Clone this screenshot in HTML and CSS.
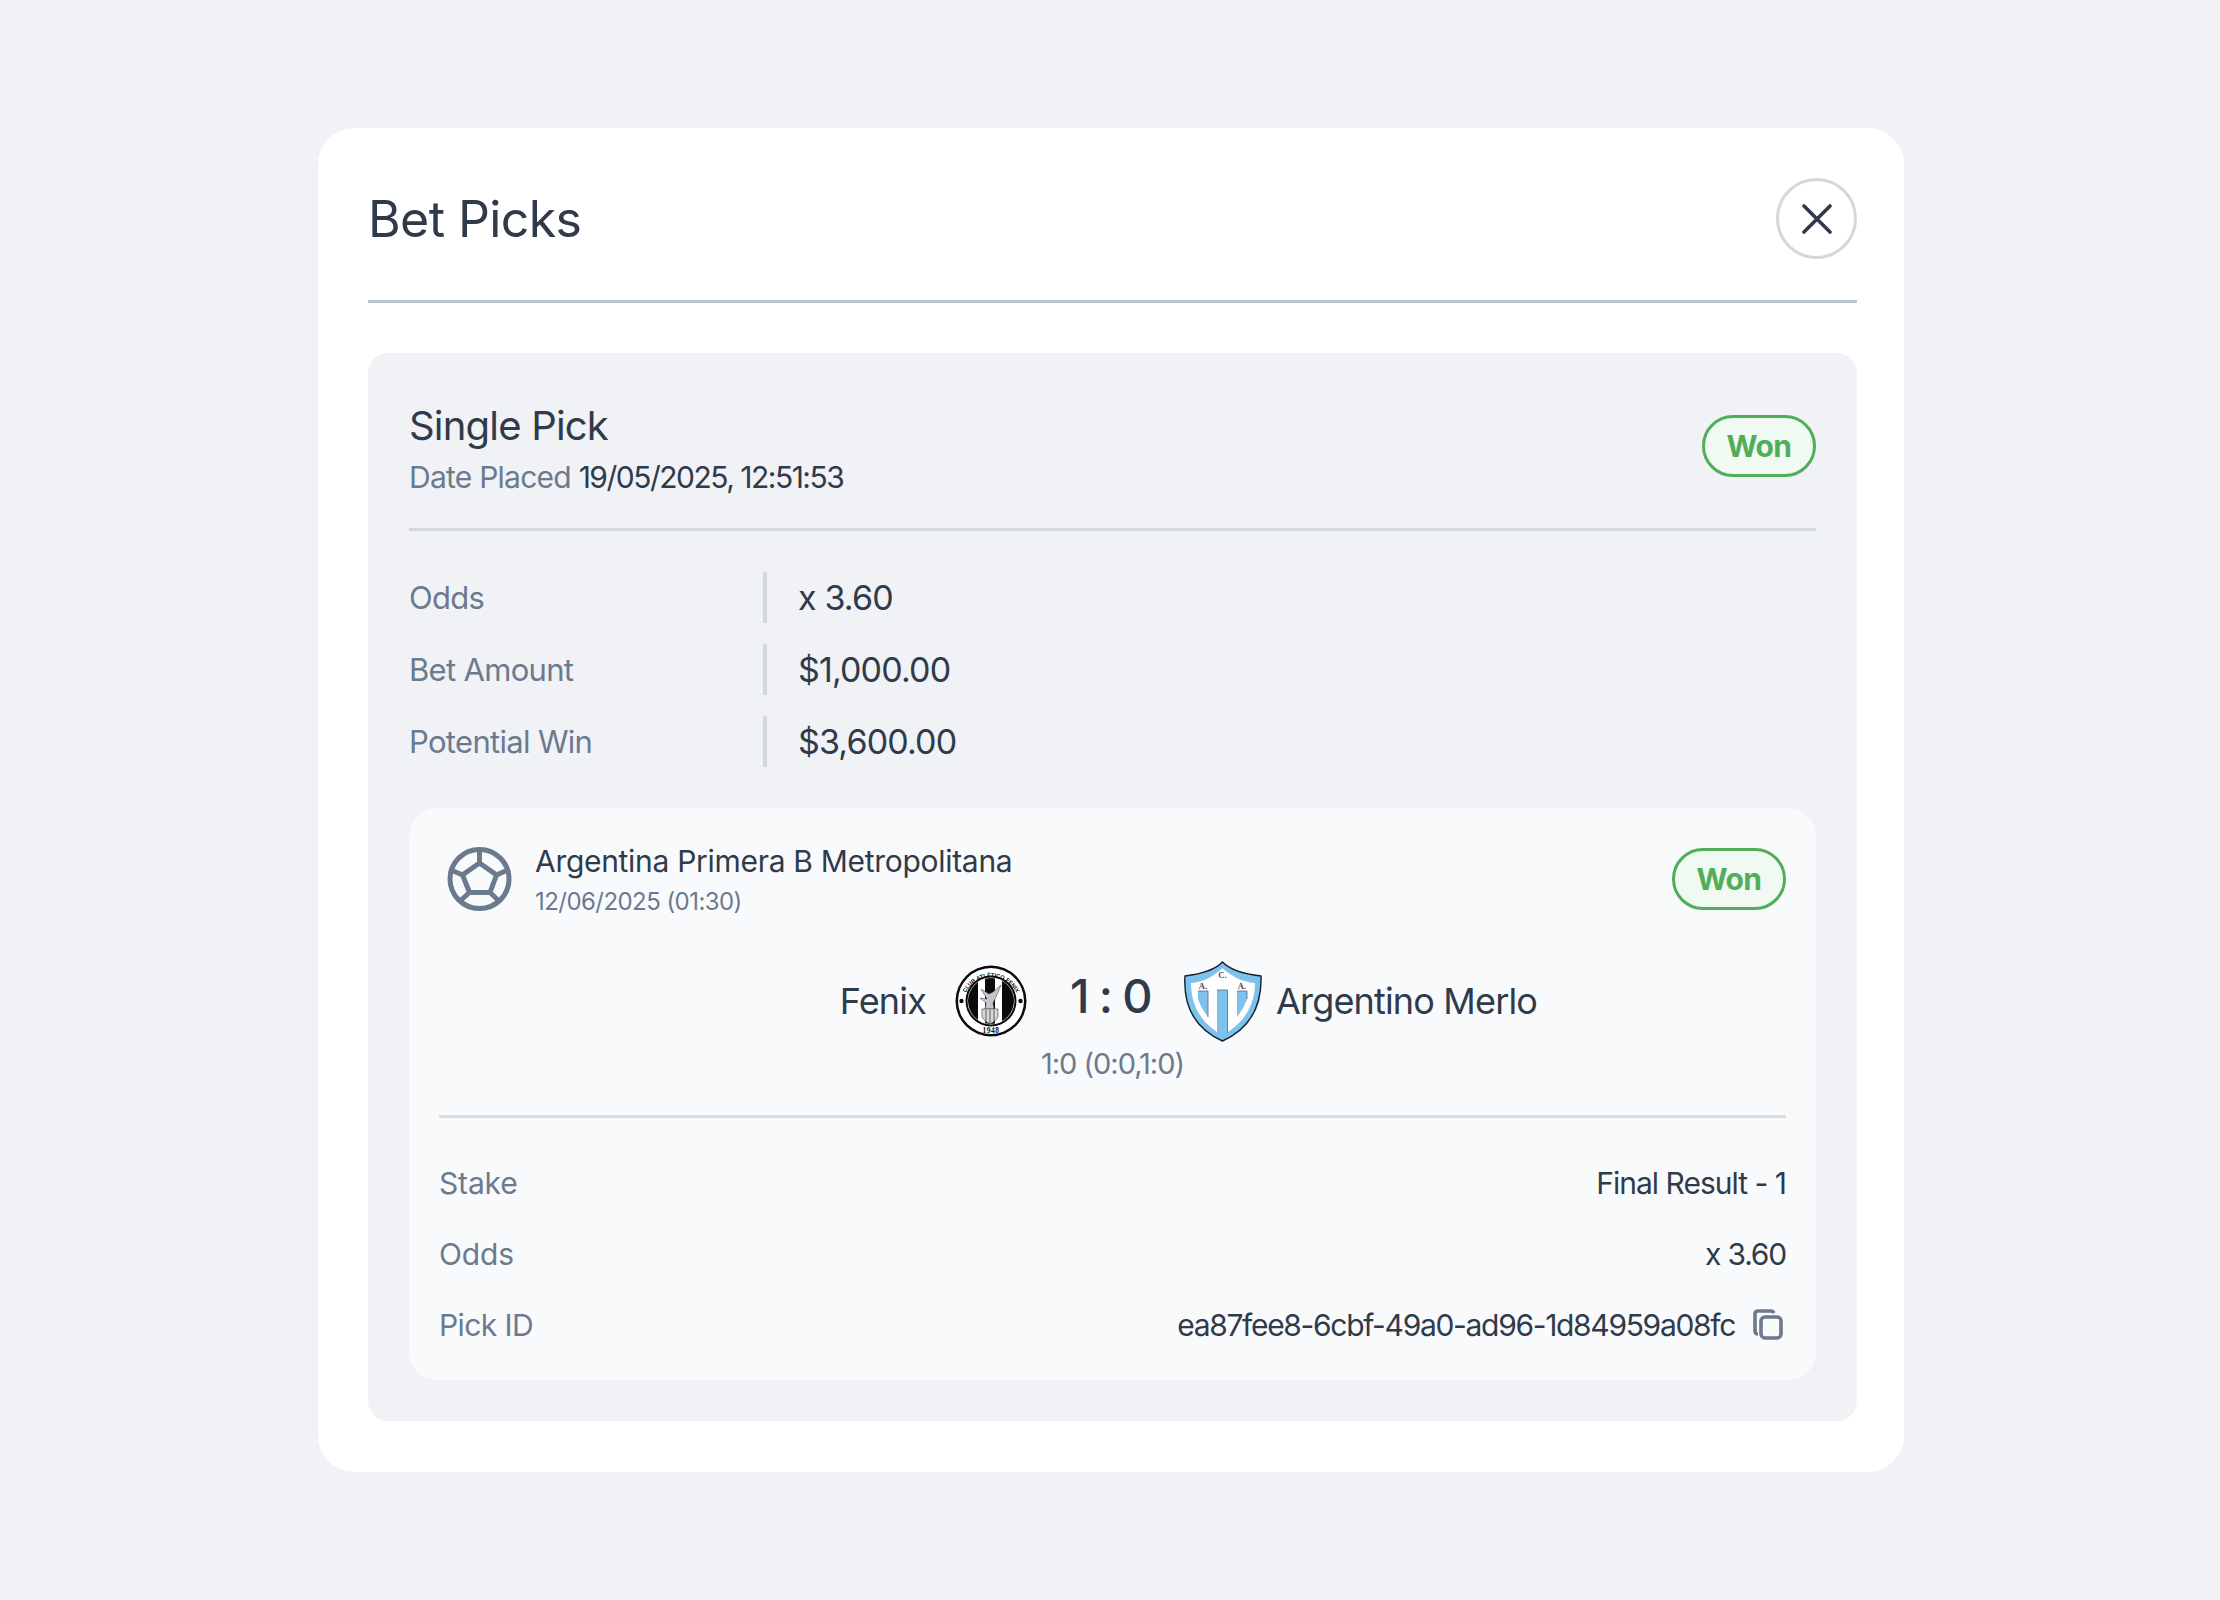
FILE: index.html
```html
<!DOCTYPE html>
<html lang="en">
<head>
<meta charset="utf-8">
<title>Bet Picks</title>
<link rel="stylesheet" href="styles.css">
</head>
<body>
<main class="modal">
  <header class="modal-head">
    <h1 class="modal-title">Bet Picks</h1>
    <button class="close-btn" aria-label="Close">
      <svg class="close-icon" viewBox="0 0 30 30"><path d="M2 2 L28 28 M28 2 L2 28"/></svg>
    </button>
  </header>

  <section class="bet-card">
    <div class="bet-head">
      <div>
        <h2 class="bet-title">Single Pick</h2>
        <p class="bet-date"><span class="muted">Date Placed</span> <span class="date-value">19/05/2025, 12:51:53</span></p>
      </div>
      <span class="badge">Won</span>
    </div>

    <dl class="summary">
      <div class="summary-row"><dt class="summary-label">Odds</dt><dd class="summary-value">x 3.60</dd></div>
      <div class="summary-row"><dt class="summary-label">Bet Amount</dt><dd class="summary-value">$1,000.00</dd></div>
      <div class="summary-row"><dt class="summary-label">Potential Win</dt><dd class="summary-value">$3,600.00</dd></div>
    </dl>

    <article class="pick">
      <div class="pick-head">
        <svg class="ball" viewBox="0 0 65 65">
          <circle cx="32.5" cy="32" r="29.5"/>
          <path d="M32.5 16 L49.5 28 L43 45.5 L22.5 45.5 L15.5 28 Z"/>
          <path d="M32.5 3 V16 M62 22.5 L49.5 28 M52 54 L43 45.5 M13 54 L22.5 45.5 M3 22.5 L15.5 28"/>
        </svg>
        <div class="league">
          <div class="league-name">Argentina Primera B Metropolitana</div>
          <div class="league-date">12/06/2025 (01:30)</div>
        </div>
        <span class="badge">Won</span>
      </div>

      <div class="match">
        <div class="team team-home">
          <span class="team-name">Fenix</span>
          <svg class="crest-home" viewBox="0 0 72 72">
            <defs>
              <path id="arc-top" d="M8 40 A28 28 0 0 1 64 40"/>
              <clipPath id="inner"><circle cx="36" cy="36" r="23"/></clipPath>
            </defs>
            <circle cx="36" cy="36" r="35.5" fill="#0b0b0d"/>
            <circle cx="36" cy="36" r="33" fill="#fff"/>
            <circle cx="36" cy="36" r="25.5" fill="#0b0b0d"/>
            <circle cx="36" cy="36" r="23.5" fill="#fff"/>
            <g clip-path="url(#inner)" fill="#0b0b0d">
              <rect x="10" y="10" width="13" height="52"/>
              <rect x="30" y="10" width="10" height="52"/>
              <rect x="47" y="10" width="16" height="52"/>
            </g>
            <path d="M46 20 L41 32 L38 38 L39 44 L30 44 L31 38 L25 33 L32 34 L26 24 L34 29 L38 27 Z" fill="#c4c7cb" stroke="#3a3a3c" stroke-width="0.5"/>
            <path d="M27 44 H43 V52 Q40 57 35 59 Q30 57 27 52 Z" fill="#d8dadd" stroke="#333" stroke-width="0.6"/>
            <path d="M31 45 V56 M35 45 V59 M39 45 V56" stroke="#55585c" stroke-width="1"/>
            <circle cx="6.5" cy="36" r="2.2" fill="#0b0b0d"/>
            <circle cx="65.5" cy="36" r="2.2" fill="#0b0b0d"/>
            <text class="crest-ring-text"><textPath href="#arc-top" startOffset="50%" text-anchor="middle">CLUB ATLÉTICO FENIX</textPath></text>
            <text class="crest-year" x="36" y="68" text-anchor="middle">1948</text>
          </svg>
        </div>
        <div class="score">1 : 0</div>
        <div class="team team-away">
          <svg class="crest-away" viewBox="0 0 78 81">
            <path d="M38.5 1 C45 8 60 13 77 15 C78 46 65 68 38.5 80 C12 68 -1 46 1 15 C17 13 32 8 38.5 1 Z" fill="#7cc2ec" stroke="#14202c" stroke-width="1.4"/>
            <path d="M7 22 C20 21 30 15 38.5 7 C47 15 58 21 71 22 C71 46 58 64 38.5 74 C19 64 7 46 7 22 Z" fill="#fff"/>
            <path d="M14 30 H24 V56 Q17 47 14 38 Z M33 29 H43.500 V72 L38.500 75 L33 72 Z M53 30 H63 V38 Q60 47 53 56 Z" fill="#7cc2ec"/>
            <path d="M14 30 H24 M33 29 H43.500 M53 30 H63 M24 30 V56 M43.500 29 V72 M63 30 V38" fill="none" stroke="#5d6b7a" stroke-width="0.8"/>
            <text class="crest-letter" x="38.500" y="17" text-anchor="middle">C.</text>
            <text class="crest-letter" x="19" y="28" text-anchor="middle">A.</text>
            <text class="crest-letter" x="58" y="28" text-anchor="middle">A.</text>
          </svg>
          <span class="team-name">Argentino Merlo</span>
        </div>
      </div>
      <div class="score-detail">1:0 (0:0,1:0)</div>

      <dl class="pick-rows">
        <div class="pick-row"><dt class="pick-label">Stake</dt><dd class="pick-value">Final Result - 1</dd></div>
        <div class="pick-row"><dt class="pick-label">Odds</dt><dd class="pick-value pick-odds">x 3.60</dd></div>
        <div class="pick-row"><dt class="pick-label pick-label-id">Pick ID</dt><dd class="pick-value pick-id">ea87fee8-6cbf-49a0-ad96-1d84959a08fc
          <svg class="copy" viewBox="0 0 30 31"><path d="M5 25 Q2 25 2 22 V5 Q2 2 5 2 H18 Q20 2 21 4"/><rect x="8" y="8" width="20" height="21" rx="4"/></svg>
        </dd></div>
      </dl>
    </article>
  </section>
</main>
</body>
</html>
```
FILE: styles.css
```css
* { box-sizing: border-box; }
html, body { margin: 0; padding: 0; }
body {
  width: 2220px;
  height: 1600px;
  background: #f0f2f6;
  font-family: Inter, "Noto Sans", sans-serif;
  color: #2f3a4a;
  padding: 128px 316px 128px 318px;
}
h1, h2, p, dl, dd, dt { margin: 0; font-weight: 400; }

.modal {
  width: 1586px;
  height: 1344px;
  background: #fff;
  border-radius: 36px;
  padding: 50px 47px 51px 50px;
}
.modal-head {
  display: flex;
  align-items: flex-start;
  justify-content: space-between;
  height: 125px;
  border-bottom: 3px solid #bcc4cc;
}
.modal-title { font-size: 50px; line-height: 83px; letter-spacing: -0.012em; color: #2f3a4a; }
.close-btn {
  width: 81px;
  height: 81px;
  border: 3px solid #d3d8df;
  border-radius: 50%;
  background: #fff;
  display: flex;
  align-items: center;
  justify-content: center;
  padding: 0;
}
.close-icon { width: 30px; height: 30px; fill: none; stroke: #2f3a4a; stroke-width: 3.6; stroke-linecap: round; }

.bet-card {
  margin-top: 50px;
  height: 1068px;
  background: #f0f2f6;
  border-radius: 20px;
  padding: 0 41px;
}
.bet-head {
  height: 178px;
  border-bottom: 3px solid #d3d8df;
  display: flex;
  justify-content: space-between;
  align-items: flex-start;
  padding-top: 49px;
}
.bet-title { font-size: 40px; line-height: 48px; letter-spacing: -0.02em; }
.bet-date { font-size: 30px; line-height: 42px; margin-top: 6px; letter-spacing: -0.025em; }
.date-value { letter-spacing: -0.05em; }
.muted { color: #6b7a8f; }

.badge {
  width: 114px;
  height: 62px;
  border: 3px solid #50ae58;
  border-radius: 31px;
  background: #f0faf3;
  color: #50ae58;
  font-size: 30px;
  font-weight: 700;
  letter-spacing: -0.02em;
  display: flex;
  align-items: center;
  justify-content: center;
  flex: none;
}
.bet-head .badge { margin-top: 13px; }

.summary { padding-top: 41px; height: 277px; }
.summary-row { display: flex; align-items: center; height: 51px; margin-bottom: 21px; }
.summary-label { width: 354px; font-size: 31px; color: #6b7a8f; letter-spacing: -0.022em; }
.summary-value {
  border-left: 4px solid #d3d8df;
  height: 51px;
  line-height: 51px;
  padding-left: 31px;
  font-size: 34px;
  letter-spacing: -0.025em;
}

.pick {
  height: 572px;
  background: #f9fafc;
  border-radius: 28px;
  padding: 0 30px;
}
.pick-head {
  display: flex;
  align-items: flex-start;
  padding-top: 39px;
  height: 151px;
}
.ball { width: 65px; height: 65px; margin: 0 23px 0 8px; fill: none; stroke: #6b7a8c; stroke-width: 5; flex: none; }
.league { flex: 1; margin-top: -6px; }
.league-name { font-size: 30px; line-height: 40px; letter-spacing: -0.01em; }
.league-date { font-size: 24px; line-height: 36px; margin-top: 3px; color: #6b7a8f; letter-spacing: -0.023em; }
.pick-head .badge { margin-top: 1px; }

.match {
  display: grid;
  grid-template-columns: 1fr 81px 1fr;
  column-gap: 31px;
  align-items: center;
  height: 84px;
}
.team { display: flex; align-items: center; }
.team-home { justify-content: flex-end; }
.team-name { font-size: 36px; letter-spacing: -0.023em; }
.crest-home { width: 72px; height: 72px; margin-left: 29px; margin-right: 14px; flex: none; }
.crest-ring-text { font-family: "Liberation Sans", sans-serif; font-size: 5.6px; font-weight: 700; fill: #0b0b0d; }
.crest-year { font-family: "Liberation Serif", serif; font-size: 7.5px; font-weight: 700; fill: #0b0b0d; letter-spacing: 0.5px; }
.crest-away { width: 78px; height: 81px; margin-right: 14px; flex: none; }
.crest-letter { font-family: "Liberation Serif", serif; font-size: 8.5px; font-weight: 700; fill: #3c4a58; }
.score {
  font-size: 47px;
  font-weight: 500;
  letter-spacing: -0.035em;
  white-space: nowrap;
  margin: -12px 2px 0 -2px;
  text-align: center;
  color: #2f3a4a;
}
.score-detail { text-align: center; font-size: 29px; line-height: 40px; color: #6b7a8f; letter-spacing: -0.035em; margin-top: 1px; }

.pick-rows {
  margin-top: 31px;
  border-top: 3px solid #d9dde4;
  padding-top: 29px;
}
.pick-row { display: flex; justify-content: space-between; align-items: center; height: 71px; }
.pick-label { font-size: 30px; color: #6b7a8f; letter-spacing: -0.005em; }
.pick-label-id { letter-spacing: -0.02em; }
.pick-value { font-size: 30px; letter-spacing: -0.033em; }
.pick-odds { letter-spacing: -0.04em; }
.pick-id { display: flex; align-items: center; gap: 18px; letter-spacing: -0.044em; }
.copy { width: 30px; height: 31px; margin-right: 3px; fill: none; stroke: #6b7a8c; stroke-width: 3.6; flex: none; }
```
